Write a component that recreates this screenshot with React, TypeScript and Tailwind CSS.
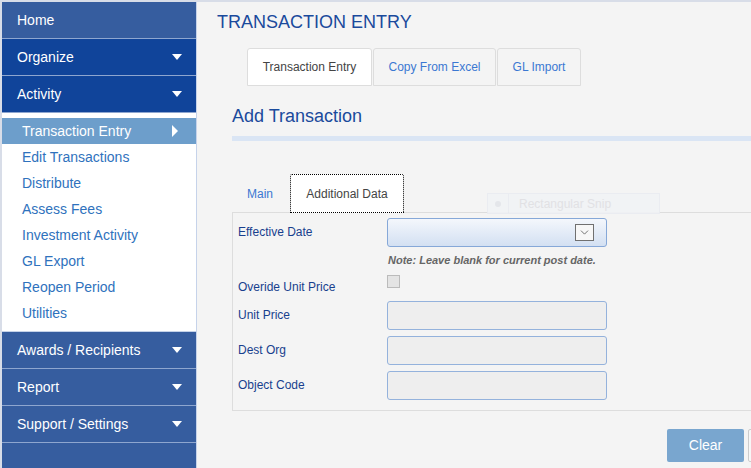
import { ChevronDown } from 'lucide-react';

const font = { fontFamily: '"Liberation Sans", Arial, sans-serif' };

function DownTri() {
  return (
    <svg width="10" height="6" viewBox="0 0 10 6" className="shrink-0">
      <path d="M0 0 L10 0 L5 6 Z" fill="#ffffff" />
    </svg>
  );
}

function RightTri() {
  return (
    <svg width="6" height="12" viewBox="0 0 6 12" className="shrink-0">
      <path d="M0 0 L6 6 L0 12 Z" fill="#ffffff" />
    </svg>
  );
}

function NavHeader({ label, dark, arrow }: { label: string; dark?: boolean; arrow?: boolean }) {
  return (
    <div
      className={`h-[37px] border-b border-[#8ea6cf] flex items-center justify-between pl-[15px] pr-[14px] text-[14px] text-white ${
        dark ? 'bg-[#10449a]' : 'bg-[#365d9f]'
      }`}
    >
      <span>{label}</span>
      {arrow && <DownTri />}
    </div>
  );
}

const subItems = [
  'Edit Transactions',
  'Distribute',
  'Assess Fees',
  'Investment Activity',
  'GL Export',
  'Reopen Period',
  'Utilities',
];

function Sidebar() {
  return (
    <div className="w-[196px] shrink-0 flex flex-col border-l-2 border-[#d8dde8] bg-[#365d9f]">
      <NavHeader label="Home" />
      <NavHeader label="Organize" dark arrow />
      <NavHeader label="Activity" dark arrow />
      <div className="bg-white py-[5px]">
        <div className="h-[26px] bg-[#6d9ecb] flex items-center justify-between pl-[20px] pr-[18px] text-[14px] text-white">
          <span>Transaction Entry</span>
          <RightTri />
        </div>
        {subItems.map((s) => (
          <div key={s} className="h-[26px] flex items-center pl-[20px] text-[14px] text-[#2f72bd]">
            {s}
          </div>
        ))}
      </div>
      <div className="border-t border-[#c5d2e8]" />
      <NavHeader label="Awards / Recipients" arrow />
      <NavHeader label="Report" arrow />
      <NavHeader label="Support / Settings" arrow />
      <div className="flex-1" />
    </div>
  );
}

function FormRow({ label, children }: { label: string; children: React.ReactNode }) {
  return (
    <div className="flex items-center">
      <div className="w-[149px] pb-[2px] text-[12px] text-[#183f8e]">{label}</div>
      {children}
    </div>
  );
}

function TextBox() {
  return <div className="w-[220px] h-[29px] bg-[#eeeeee] border border-[#94b2dc] rounded-[3px]" />;
}

export default function App() {
  return (
    <div style={font} className="w-[751px] h-[468px] flex overflow-hidden border-t-2 border-[#d8dde8] bg-[#f4f4f4]">
      <Sidebar />
      <div className="flex-1 min-w-0 border-l border-[#c6d3ea] bg-[#f4f4f4] relative overflow-hidden">
        <h1 className="pl-[20px] pt-[9px] text-[18px] leading-[22px] text-[#1a4a9c]">TRANSACTION ENTRY</h1>

        <div className="ml-[35px] w-[620px]">
          <div className="flex ml-[15px] mt-[15px] gap-[1px]">
            <div className="w-[125px] h-[38px] bg-white border border-[#dddddd] rounded-t-[3px] flex items-center justify-center text-[12px] text-[#444444]">
              Transaction Entry
            </div>
            <div className="w-[123px] h-[38px] border border-[#dddddd] rounded-t-[3px] flex items-center justify-center text-[12px] text-[#3b78d2]">
              Copy From Excel
            </div>
            <div className="w-[84px] h-[38px] border border-[#dddddd] rounded-t-[3px] flex items-center justify-center text-[12px] text-[#3b78d2]">
              GL Import
            </div>
          </div>

          <h2 className="mt-[19px] text-[18px] leading-[22px] text-[#1a4a9c]">Add Transaction</h2>
          <div className="mt-[9px] h-[5px] bg-[#dae5f4]" />

          <div className="flex items-end mt-[33px] h-[39px]">
            <div className="w-[58px] h-full flex items-center pl-[15px] text-[12px] text-[#3b78d2]">Main</div>
            <div className="w-[114px] h-[39px] bg-white border border-dotted border-black rounded-t-[2px] flex items-center justify-center text-[12px] text-[#444444] relative z-10">
              Additional Data
            </div>
          </div>

          <div className="border border-[#dddddd] -mt-[1px] pl-[5px] pt-[5px] pb-[10px]">
            <FormRow label="Effective Date">
              <div className="w-[220px] h-[29px] border border-[#86a8d8] rounded-[3px] bg-gradient-to-b from-[#f4f7fc] to-[#d3e0f2] flex items-center justify-end pr-[12px]">
                <div className="w-[19px] h-[17px] bg-[#f7f7f7] border border-[#707070] flex items-center justify-center">
                  <ChevronDown size={13} strokeWidth={1.5} color="#555555" />
                </div>
              </div>
            </FormRow>
            <div className="mt-[5px] ml-[150px] h-[16px] leading-[16px] text-[11px] italic font-bold text-[#666666]">
              Note: Leave blank for current post date.
            </div>
            <div className="flex items-start mt-[6px] h-[20px]">
              <div className="w-[149px] mt-[6px] text-[12px] leading-[14px] text-[#183f8e]">Overide Unit Price</div>
              <div className="w-[13px] h-[13px] mt-[1px] bg-[#e4e4e4] border border-[#bbbbbb]" />
            </div>
            <div className="mt-[7px]">
              <FormRow label="Unit Price">
                <TextBox />
              </FormRow>
            </div>
            <div className="mt-[6px]">
              <FormRow label="Dest Org">
                <TextBox />
              </FormRow>
            </div>
            <div className="mt-[6px]">
              <FormRow label="Object Code">
                <TextBox />
              </FormRow>
            </div>
          </div>

          <div className="flex mt-[18px] pl-[435px] gap-[4px]">
            <div className="w-[77px] h-[33px] bg-[#79a6cf] rounded-[2px] flex items-center justify-center text-[14px] text-white">
              Clear
            </div>
            <div className="w-[77px] h-[33px] bg-[#f7f7f7] border border-[#cccccc] rounded-[2px]" />
          </div>
        </div>

        <div className="absolute left-[290px] top-[191px] w-[173px] h-[21px] flex border border-[#e9ecf1] bg-[#f1f3f6] opacity-90">
          <div className="w-[21px] flex items-center justify-center border-r border-[#e9ecf1]">
            <div className="w-[6px] h-[6px] rounded-full bg-[#e3e5ea]" />
          </div>
          <div className="flex-1 pl-[10px] flex items-center text-[12px] text-[#e0e0e3]">Rectangular Snip</div>
        </div>
      </div>
    </div>
  );
}
